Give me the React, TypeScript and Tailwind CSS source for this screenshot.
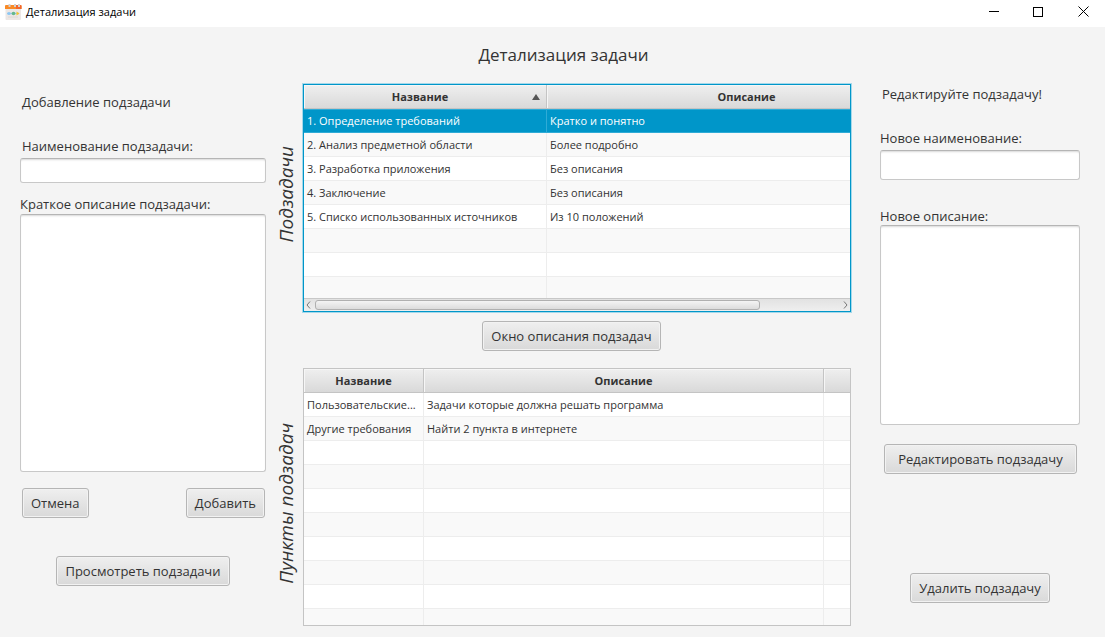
import type { ReactNode } from 'react';

const subtasks: [string, string][] = [
  ['1. Определение требований', 'Кратко и понятно'],
  ['2. Анализ предметной области', 'Более подробно'],
  ['3. Разработка приложения', 'Без описания'],
  ['4. Заключение', 'Без описания'],
  ['5. Списко использованных источников', 'Из 10 положений'],
  ['', ''],
  ['', ''],
  ['', ''],
];

const points: [string, string][] = [
  ['Пользовательские...', 'Задачи которые должна решать программа'],
  ['Другие требования', 'Найти 2 пункта в интернете'],
  ['', ''],
  ['', ''],
  ['', ''],
  ['', ''],
  ['', ''],
  ['', ''],
  ['', ''],
  ['', ''],
];

const fieldStyle =
  'block w-full resize-none rounded-[3px] border border-[#c8c8c8] border-t-[#b5b5b5] bg-white px-2 text-[13px] shadow-[inset_0_2px_2px_-1px_#d8d8d8] outline-none';

const headStyle =
  'h-6 border-r border-b border-[#c4c4c4] bg-linear-to-b from-[#efefef] to-[#d9d9d9] p-0 pt-px text-center font-bold shadow-[inset_1px_1px_0_#f6f6f6]';

const cellStyle = 'h-6 truncate border-r border-b border-[#ededed] px-[3px] pt-px pb-0';

function Button({ children, className = '' }: { children: ReactNode; className?: string }) {
  return (
    <button
      type="button"
      className={`h-[30px] rounded-[3px] border border-[#b5b5b5] bg-linear-to-b from-[#efefef] to-[#d9d9d9] px-2 pt-0.5 text-[13px] whitespace-nowrap shadow-[inset_0_0_0_1px_#f2f2f2] ${className}`}
    >
      {children}
    </button>
  );
}

function SideLabel({ children, className = '' }: { children: ReactNode; className?: string }) {
  return (
    <div className={`flex w-[27px] shrink-0 items-center ${className}`}>
      <span className="rotate-180 text-[19px] leading-5 whitespace-nowrap italic [writing-mode:vertical-rl]">
        {children}
      </span>
    </div>
  );
}

function TitleBar() {
  return (
    <header className="flex h-[27px] items-start justify-between bg-white text-black">
      <div className="flex items-center gap-1 pt-[3px] pl-[5px]">
        <svg width="17" height="17" viewBox="0 0 17 17" aria-hidden="true">
          <rect x="0.5" y="2" width="15.5" height="14" rx="1" fill="#ece7e5" />
          <path d="M0 2a1 1 0 0 1 1-1h14.500a1 1 0 0 1 1 1v3H0z" fill="#f98a26" />
          <path d="M11 1h4.500a1 1 0 0 1 1 1v3H11z" fill="#f2662b" />
          <path d="M4.500 0v3M10 0v3M14 0v3" stroke="#d5d0ce" strokeWidth="2" />
          <path d="M2 9.500h12" stroke="#9fcbe8" strokeWidth="1.500" />
          <circle cx="4" cy="9.500" r="1.500" fill="#8cc7f5" />
          <circle cx="8.500" cy="9.500" r="1.800" fill="#65b88b" />
          <path d="M11.500 7.500l3 2-3 2z" fill="#f7c52e" />
          <path d="M3 13h10" stroke="#dcd8d6" />
        </svg>
        <span className="text-[11px] leading-[18px]">Детализация задачи</span>
      </div>
      <div className="flex">
        <button type="button" aria-label="Свернуть" className="flex h-[23px] w-[45px] items-center justify-center">
          <svg width="11" height="11" viewBox="0 0 11 11" shapeRendering="crispEdges">
            <path d="M0.500 5.500h10" stroke="#000" />
          </svg>
        </button>
        <button type="button" aria-label="Развернуть" className="mr-px flex h-[23px] w-[45px] items-center justify-center">
          <svg width="11" height="11" viewBox="0 0 11 11" shapeRendering="crispEdges">
            <path d="M0.500 1.500h9v9h-9z" fill="none" stroke="#000" />
          </svg>
        </button>
        <button type="button" aria-label="Закрыть" className="flex h-[23px] w-[43px] items-center justify-center">
          <svg width="11" height="11" viewBox="0 0 11 11">
            <path d="M0.500 0.500l10 10M10.500 0.500l-10 10" stroke="#000" />
          </svg>
        </button>
      </div>
    </header>
  );
}

function AddPanel() {
  return (
    <section className="flex w-[246px] shrink-0 flex-col pt-[65px]">
      <h2 className="pl-0.5 leading-5">Добавление подзадачи</h2>
      <label htmlFor="name" className="mt-6 pl-0.5 leading-5">
        Наименование подзадачи:
      </label>
      <input id="name" className={`mt-0.5 h-[25px] ${fieldStyle}`} />
      <label htmlFor="description" className="mt-[11px] leading-5">
        Краткое описание подзадачи:
      </label>
      <textarea id="description" className={`h-[258px] ${fieldStyle}`} />
      <div className="mt-4 flex justify-between pr-px pl-0.5">
        <Button>Отмена</Button>
        <Button>Добавить</Button>
      </div>
      <Button className="mt-[38px] self-center">Просмотреть подзадачи</Button>
    </section>
  );
}

function SubtaskTable() {
  return (
    <div className="flex h-[228px] min-w-0 flex-1 flex-col border border-[#0096c9] bg-white shadow-[0_0_0_1px_#a5d8ea]">
      <div className="min-h-0 flex-1 overflow-hidden">
        <table className="w-[643px] table-fixed border-separate border-spacing-0 text-[11px] leading-4">
          <colgroup>
            <col className="w-[243px]" />
            <col className="w-[400px]" />
          </colgroup>
          <thead>
            <tr>
              <th className={headStyle}>
                <div className="flex items-center pr-1.5 pl-1">
                  <span className="flex-1">Название</span>
                  <svg width="8" height="6" viewBox="0 0 8 6" aria-hidden="true">
                    <path d="M0 6l4-6 4 6z" fill="#555" />
                  </svg>
                </div>
              </th>
              <th className={headStyle}>Описание</th>
            </tr>
          </thead>
          <tbody>
            {subtasks.map(([name, description], i) =>
              i === 0 ? (
                <tr key={i} className="bg-[#0096c9] text-white">
                  <td className="h-6 truncate border-r border-[#2fabd6] px-[3px] py-0 shadow-[inset_0_2px_0_-1px_#2fabd6,inset_0_-2px_0_-1px_#2fabd6]">
                    {name}
                  </td>
                  <td className="h-6 truncate px-[3px] py-0 shadow-[inset_0_2px_0_-1px_#2fabd6,inset_0_-2px_0_-1px_#2fabd6]">
                    {description}
                  </td>
                </tr>
              ) : (
                <tr key={i} className="odd:bg-white even:bg-[#f9f9f9]">
                  <td className={cellStyle}>{name}</td>
                  <td className={cellStyle}>{description}</td>
                </tr>
              ),
            )}
          </tbody>
        </table>
      </div>
      <div className="flex h-[13px] shrink-0 items-center border-t border-[#c8c8c8] bg-linear-to-b from-[#e2e2e2] to-[#efefef] px-0.5">
        <svg width="5" height="8" viewBox="0 0 5 8" aria-hidden="true">
          <path d="M4 0.500L1 4l3 3.500" fill="none" stroke="#777" />
        </svg>
        <div className="mx-1 h-2.5 flex-1">
          <div className="h-full w-[85%] rounded-[3px] border border-[#b0b0b0] bg-linear-to-b from-[#f4f4f4] to-[#dcdcdc]" />
        </div>
        <svg width="5" height="8" viewBox="0 0 5 8" aria-hidden="true">
          <path d="M1 0.500L4 4 1 7.500" fill="none" stroke="#777" />
        </svg>
      </div>
    </div>
  );
}

function PointTable() {
  return (
    <div className="h-[258px] min-w-0 flex-1 overflow-hidden border border-[#c4c4c4] bg-white">
      <table className="w-full table-fixed border-separate border-spacing-0 text-[11px] leading-4">
        <colgroup>
          <col className="w-[120px]" />
          <col className="w-[400px]" />
          <col />
        </colgroup>
        <thead>
          <tr>
            <th className={headStyle}>Название</th>
            <th className={headStyle}>Описание</th>
            <th className={`${headStyle} border-r-0`} />
          </tr>
        </thead>
        <tbody>
          {points.map(([name, description], i) => (
            <tr key={i} className="odd:bg-white even:bg-[#f9f9f9]">
              <td className={cellStyle}>{name}</td>
              <td className={cellStyle}>{description}</td>
              <td className={`${cellStyle} border-r-0`} />
            </tr>
          ))}
        </tbody>
      </table>
    </div>
  );
}

function EditPanel() {
  return (
    <section className="ml-[29px] flex w-[200px] shrink-0 flex-col pt-[57px]">
      <h2 className="pl-0.5 leading-5">Редактируйте подзадачу!</h2>
      <label htmlFor="new-name" className="mt-6 leading-5">
        Новое наименование:
      </label>
      <input id="new-name" className={`mt-0.5 h-[30px] ${fieldStyle}`} />
      <label htmlFor="new-description" className="mt-[27px] leading-[18px]">
        Новое описание:
      </label>
      <textarea id="new-description" className={`h-[200px] ${fieldStyle}`} />
      <Button className="mt-[19px] mr-[3px] ml-1">Редактировать подзадачу</Button>
      <Button className="mt-[99px] self-center">Удалить подзадачу</Button>
    </section>
  );
}

export default function App() {
  return (
    <div className="min-h-screen bg-[#f4f4f4] font-['Open_Sans','Noto_Sans',sans-serif] text-[13px] text-[#333]">
      <TitleBar />
      <main className="flex pr-[25px] pl-5">
        <AddPanel />
        <section className="ml-2.5 flex min-w-0 flex-1 flex-col pt-4">
          <h1 className="text-center text-[17px] leading-6">Детализация задачи</h1>
          <div className="mt-[17px] flex">
            <SideLabel className="pb-2">Подзадачи</SideLabel>
            <SubtaskTable />
          </div>
          <Button className="mt-[9px] ml-4 self-center">Окно описания подзадач</Button>
          <div className="mt-[17px] flex">
            <SideLabel className="pt-3">Пункты подзадач</SideLabel>
            <PointTable />
          </div>
        </section>
        <EditPanel />
      </main>
    </div>
  );
}
